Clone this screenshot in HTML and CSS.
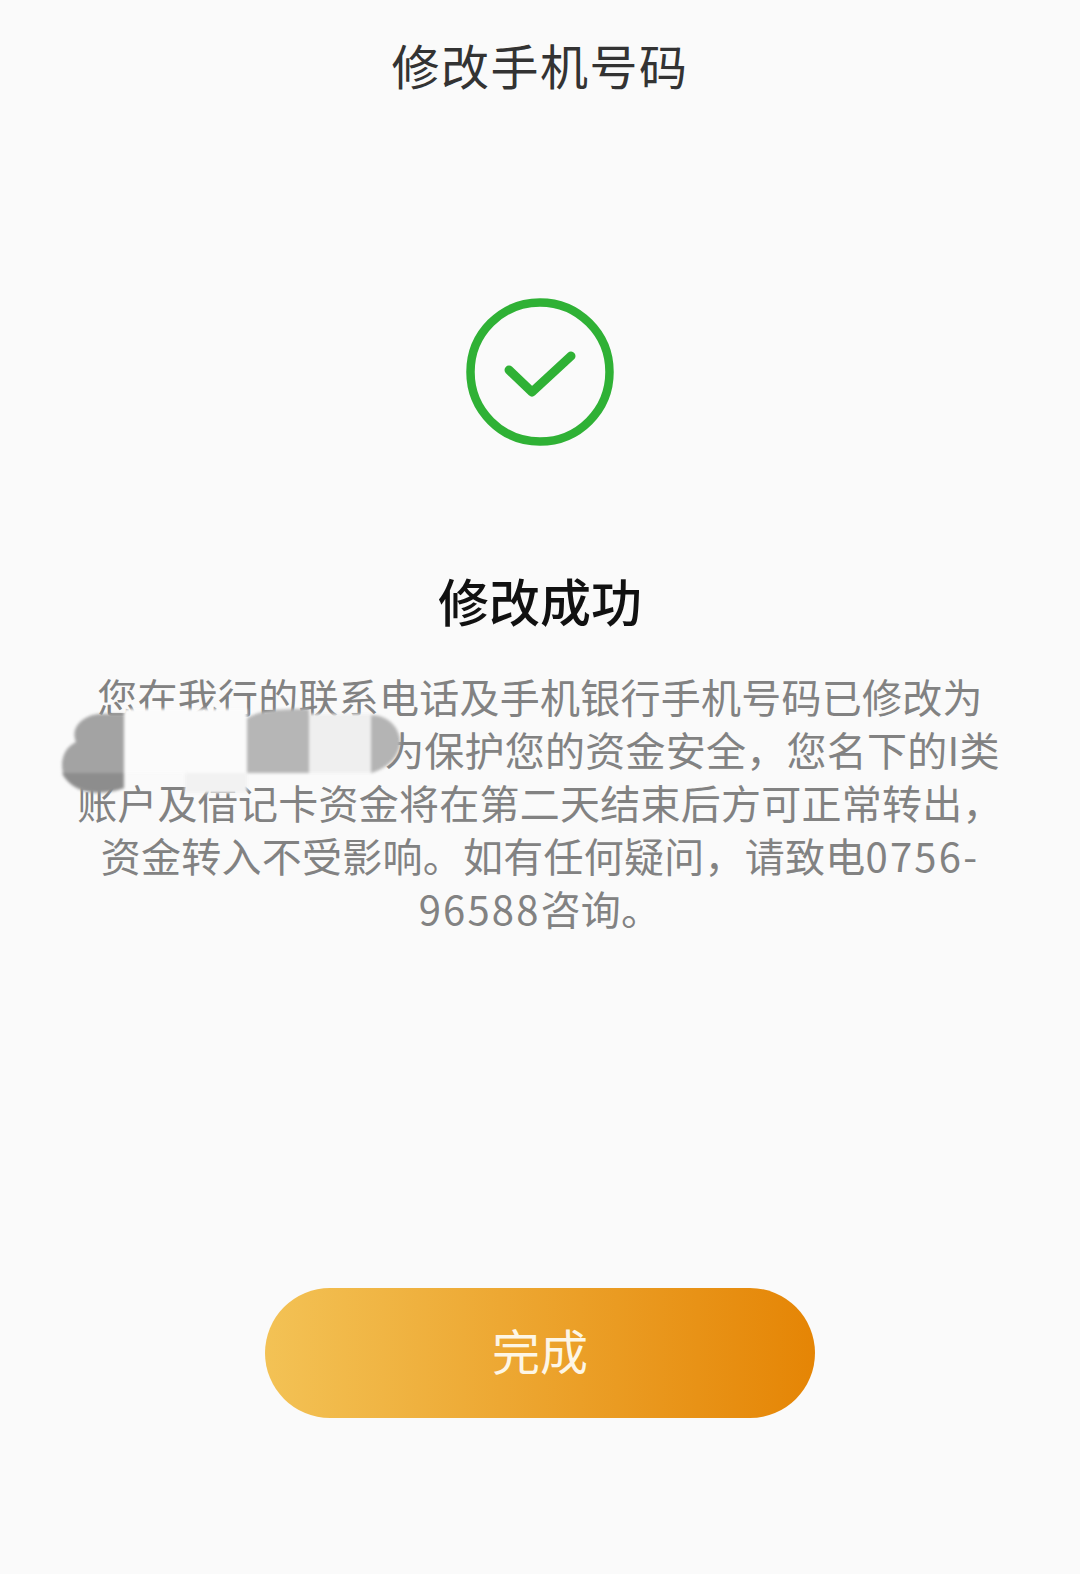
FILE: index.html
```html
<!doctype html>
<html lang="zh">
	<head>
		<meta charset="utf-8">
		<title>修改手机号码</title>
		<link rel="stylesheet" href="styles.css">
	</head>
	<body>
		<!-- Title -->
		<header class="title">修改手机号码</header>
		<main>
			<!-- Success icon -->
			<svg class="check" width="148" height="148" viewBox="0 0 148 148">
				<circle cx="74" cy="74" r="69.5" fill="none" stroke="#2fb135" stroke-width="8.500"/>
				<path d="M43 72 L66 94 L105 58" fill="none" stroke="#2fb135" stroke-width="9" stroke-linecap="round" stroke-linejoin="round"/>
			</svg>
			<h1>修改成功</h1>
			<div class="notice">
				<p>您在我行的联系电话及手机银行手机号码已修改为<br><span class="phone"></span>为保护您的资金安全，您名下的I类<br>账户及借记卡资金将在第二天结束后方可正常转出，<br>资金转入不受影响。如有任何疑问，请致电<span class="num">0756-</span><br><span class="num">96588</span>咨询。</p>
				<!-- Blurred phone number, sits over the text -->
				<svg class="smudge" width="340" height="90" viewBox="0 0 340 90">
					<path d="M62 6 H36 C20 8 8 20 14 34 C2 40 -2 52 1 65 C6 80 28 92 62 80 Z" fill="#a3a3a3"/>
					<path d="M0 65 H62 V80 C34 90 6 80 0 65 Z" fill="#8d8d8d"/>
					<rect x="62" y="1" width="123" height="64" fill="#fbfbfb"/>
					<rect x="123" y="65" width="62" height="20" fill="#f2f2f2"/>
					<path d="M185 10 C196 4 206 1 247 1 V65 H185 Z" fill="#b6b6b6"/>
					<rect x="247" y="6" width="62" height="59" fill="#efefef"/>
					<path d="M309 7 C326 7 338 20 338 34 C338 48 326 60 309 65 Z" fill="#b4b4b4"/>
				</svg>
			</div>
		</main>
		<button class="done">完成</button>
	</body>
</html>
```

FILE: styles.css
```css
* {
	padding: 0px;
	margin: 0px;
	box-sizing: border-box;
}
html, body {
	height: 100%;
}
body {
	background: #fafafa;
	font-family: "Noto Sans CJK SC", "Noto Sans", sans-serif;
	display: flex;
	flex-direction: column;
	align-items: center;
}
.title {
	margin-top: 28px;
	font-size: 48px;
	line-height: 72px;
	letter-spacing: 1.500px;
	color: #333333;
}
main {
	display: flex;
	flex-direction: column;
	align-items: center;
	width: 100%;
}
.check {
	display: block;
	margin-top: 198px;
}
h1 {
	margin-top: 119px;
	font-size: 51px;
	line-height: 70px;
	font-weight: 500;
	color: #111111;
}
.notice {
	position: relative;
	width: 100%;
	margin-top: 35px;
	text-align: center;
	font-size: 40px;
	line-height: 53px;
	letter-spacing: 0.250px;
	color: #828282;
}
.phone {
	display: inline-block;
	width: 304px;
}
.num {
	letter-spacing: 2.200px;
}
.smudge {
	position: absolute;
	left: 62px;
	top: 38px;
	filter: blur(1.500px);
}
.done {
	width: 550px;
	height: 130px;
	margin-top: 353px;
	padding-bottom: 8px;
	border: none;
	border-radius: 65px;
	background: linear-gradient(to right, #f3c255, #e58505);
	font-family: inherit;
	font-size: 48px;
	color: #fdf6e6;
}
```
